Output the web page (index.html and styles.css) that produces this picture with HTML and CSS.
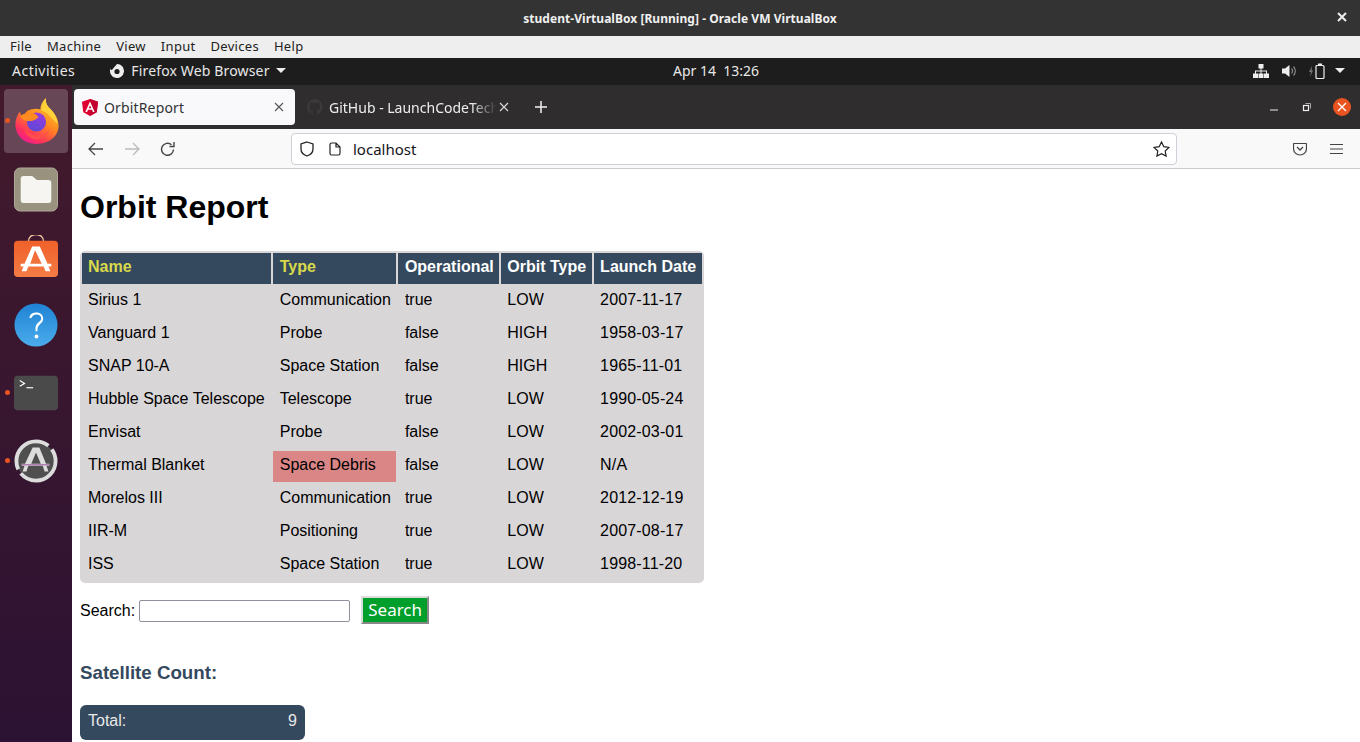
FILE: index.html
```html
<!DOCTYPE html>
<html lang="en">
  <head>
    <meta charset="UTF-8" />
    <title>OrbitReport</title>
    <link rel="stylesheet" href="styles.css">
  </head>
  <body>
    <header class="vm-title">
      <span>student-VirtualBox [Running] - Oracle VM VirtualBox</span>
      <svg class="vm-close" width="10" height="10" viewBox="0 0 10 10"><path d="M1 1l8 8M9 1l-8 8" stroke="#eee" stroke-width="2"/></svg>
    </header>
    <nav class="vm-menu">
      <span>File</span><span>Machine</span><span>View</span><span>Input</span><span>Devices</span><span>Help</span>
    </nav>
    <div class="gnome-bar">
      <span class="activities">Activities</span>
      <div class="app-menu">
        <svg width="16" height="16" viewBox="0 0 16 16"><path d="M8 1a7 7 0 1 1-6.600 4.700C2 7 3 7.600 4.200 7.600 3.800 5.500 5 3.500 7 3 6.500 4.200 7 4.800 8 5a3 3 0 1 1-3 4.200C3.800 8.800 3 8.200 2.500 7.500" fill="#eee"/><circle cx="8" cy="8.500" r="2.600" fill="#1d1d1d"/></svg>
        <span>Firefox Web Browser</span>
        <i class="caret"></i>
      </div>
      <span class="clock">Apr 14&nbsp; 13:26</span>
      <div class="tray">
        <svg width="16" height="14" viewBox="0 0 16 14"><path d="M5.500 0h5v4.500h-2V6.500H14v3h2V14h-5V9.500h2V7.500H8.500v2h2V14h-5V9.500h2v-2H3v2h2V14H0V9.500h2v-3h5.500V4.500h-2z" fill="#eee"/></svg>
        <svg class="tray-speaker" width="16" height="14" viewBox="0 0 16 14"><path d="M0 4.500h3L7.500 1v12L3 9.500H0z" fill="#eee"/><path d="M9.500 4.500a3.500 3.500 0 0 1 0 5M11.500 2.500a6.500 6.500 0 0 1 0 9" fill="none" stroke="#888" stroke-width="1.200"/></svg>
        <svg width="16" height="16" viewBox="0 0 16 16"><path d="M3 3L0 9h2l-1 5 3-6.500H2.500z" fill="#777"/><rect x="7" y="2.500" width="8" height="13" rx="1" fill="none" stroke="#eee" stroke-width="1.200"/><rect x="9" y="0.500" width="4" height="2" fill="#eee"/></svg>
        <i class="caret tray-caret"></i>
      </div>
    </div>

    <div class="desktop">
      <aside class="dock">
        <div class="dock-item active">
          <i class="run-dot"></i>
          <svg width="45" height="46" viewBox="0 0 46 48">
            <defs>
              <linearGradient id="ffBody" x1="0.800" y1="0" x2="0.200" y2="1"><stop offset="0" stop-color="#ffd53a"/><stop offset="0.450" stop-color="#ff8a1f"/><stop offset="0.800" stop-color="#ff2f5e"/><stop offset="1" stop-color="#e8199a"/></linearGradient>
              <linearGradient id="ffGlobe" x1="0.700" y1="0" x2="0.300" y2="1"><stop offset="0" stop-color="#9a3be0"/><stop offset="1" stop-color="#5b49d6"/></linearGradient>
            </defs>
            <path d="M33 0c-1 5 1 8 5 12 5 5 8 11 8 17 0 11-10 19-23 19C10 48 1 39 1 28c0-6 2-11 5-14 0 3 1 5 3 6 1-4 4-7 8-8 4-1 7-1 10 0C27 8 29 3 33 0z" fill="url(#ffBody)"/>
            <path d="M33 0c-1 5 1 8 5 12 4 4 7 10 7 15l-8-8c-2-3-5-5-9-6 0-5 2-10 5-13z" fill="#ffd03a"/>
            <circle cx="23" cy="25" r="10" fill="url(#ffGlobe)"/>
            <path d="M6 19c2 3 4 5 9 5 4 0 7-1 10-4-2-3-5-5-9-4-5 0-8 1-10 3z" fill="#ff8a1f"/>
            <path d="M10 30c3 6 8 9 14 9 5 0 9-2 12-6-3 8-9 11-15 10-6-1-10-6-11-13z" fill="#ff4d4d"/>
          </svg>
        </div>
        <div class="dock-item">
          <svg width="44" height="45" viewBox="0 0 46 46">
            <rect x="0.500" y="0.500" width="45" height="45" rx="6" fill="#99927f" stroke="#b3ad9c"/>
            <path d="M7 12a3 3 0 0 1 3-3h9l5 4h12a3 3 0 0 1 3 3v18a3 3 0 0 1-3 3H10a3 3 0 0 1-3-3z" fill="#f7f5f1"/>
          </svg>
        </div>
        <div class="dock-item">
          <svg width="44" height="44" viewBox="0 0 46 46">
            <defs><linearGradient id="shopBg" x1="0" y1="0" x2="0" y2="1"><stop offset="0" stop-color="#f0602a"/><stop offset="1" stop-color="#f47c45"/></linearGradient></defs>
            <path d="M15 7c0-10 16-10 16 0" fill="none" stroke="#f2c9a0" stroke-width="1.500"/>
            <rect y="6" width="46" height="38" rx="4" fill="url(#shopBg)"/>
            <path d="M19 12h8l8 18h4v3h-3l2 5h-5l-2-5H15l-2 5H8l2-5H7v-3h4zM22 16l-5 14h12z" fill="#fff" fill-rule="evenodd"/>
          </svg>
        </div>
        <div class="dock-item">
          <svg width="44" height="44" viewBox="0 0 46 46">
            <defs><linearGradient id="helpBg" x1="0" y1="0" x2="0" y2="1"><stop offset="0" stop-color="#1f82d4"/><stop offset="1" stop-color="#4bacec"/></linearGradient></defs>
            <circle cx="23" cy="23" r="22.500" fill="url(#helpBg)"/>
            <path d="M16 15.500C17 11 20 10 23.500 10c4 0 7 2.500 7 6.500 0 5-5.500 5.500-6 11v2h-2v-3c0-6 6-6.500 6-10.500 0-2.500-2-4-5-4-2.500 0-4.500 1.500-5.500 4z" fill="#fff"/>
            <circle cx="23.500" cy="35" r="2" fill="#fff"/>
          </svg>
        </div>
        <div class="dock-item">
          <i class="run-dot"></i>
          <svg width="44" height="36" viewBox="0 0 46 36">
            <rect width="46" height="36" rx="4" fill="#4a4a4a"/>
            <path d="M6 5l5 3-5 3" fill="none" stroke="#fff" stroke-width="1.200"/>
            <path d="M13 12.500h7" stroke="#fff" stroke-width="1.200"/>
          </svg>
        </div>
        <div class="dock-item">
          <i class="run-dot"></i>
          <svg width="44" height="46" viewBox="0 0 46 46">
            <circle cx="23" cy="23" r="20" fill="#4f4f4f"/>
            <circle cx="23" cy="23" r="20.500" fill="none" stroke="#ddd" stroke-width="4" stroke-dasharray="50 5 55 5 14 0"/>
            <path d="M19.500 9h7l7 17h3.500v2h-3l2 6h-4l-2-6H15l-2 6H9l2-6H8v-2h3.500zM23 14l-5 12h10z" fill="#ddd" fill-rule="evenodd"/>
            <path d="M8 27h29" stroke="#9a4ea0" stroke-width="1"/>
          </svg>
        </div>
      </aside>

      <div class="browser">
        <div class="tab-bar">
          <div class="tab active-tab">
            <svg width="16" height="17" viewBox="0 0 16 17"><path d="M8 0l8 2.800-1.300 10.500L8 17l-6.700-3.700L0 2.800z" fill="#dd0031"/><path d="M8 0l8 2.800-1.300 10.500L8 17z" fill="#c3002f"/><path d="M8 2.500L3.300 13h1.800l.9-2.300h4l.9 2.300h1.800zM8 6.500l1.400 2.800H6.600z" fill="#fff" fill-rule="evenodd"/></svg>
            <span class="tab-name">OrbitReport</span>
            <svg class="tab-x" width="10" height="10" viewBox="0 0 10 10"><path d="M1 1l8 8M9 1l-8 8" stroke="#555" stroke-width="1.100"/></svg>
          </div>
          <div class="tab other-tab">
            <svg width="16" height="16" viewBox="0 0 16 16"><path d="M8 0a8 8 0 0 0-2.500 15.600c.4.100.5-.2.500-.4v-1.400c-2.200.5-2.700-1-2.700-1-.4-.9-.9-1.200-.9-1.200-.7-.5.100-.5.100-.5.800.1 1.200.8 1.200.8.700 1.200 1.900.9 2.300.7.100-.5.300-.9.500-1.100-1.800-.2-3.600-.9-3.600-4 0-.9.300-1.600.8-2.100-.1-.2-.4-1 .1-2.100 0 0 .7-.2 2.200.8a7.600 7.600 0 0 1 4 0c1.500-1 2.200-.8 2.200-.8.400 1.100.2 1.900.1 2.100.5.600.8 1.300.8 2.100 0 3.100-1.900 3.700-3.700 3.900.3.300.6.800.6 1.500v2.200c0 .2.100.5.600.4A8 8 0 0 0 8 0z" fill="#3a3a3a"/></svg>
            <span class="tab-name fade">GitHub - LaunchCodeTech</span>
            <svg class="tab-x" width="10" height="10" viewBox="0 0 10 10"><path d="M1 1l8 8M9 1l-8 8" stroke="#ddd" stroke-width="1.100"/></svg>
          </div>
          <svg class="new-tab" width="14" height="14" viewBox="0 0 14 14"><path d="M7 1v12M1 7h12" stroke="#f2f2f2" stroke-width="1.500"/></svg>
          <div class="win-controls">
            <svg width="10" height="10" viewBox="0 0 10 10"><path d="M1 8h8" stroke="#eee" stroke-width="1"/></svg>
            <svg width="10" height="10" viewBox="0 0 10 10"><rect x="1.500" y="3.500" width="5" height="5" fill="none" stroke="#eee" stroke-width="1.200"/><path d="M3.500 1.500h5v5" fill="none" stroke="#aaa" stroke-width="1"/></svg>
            <span class="win-close"><svg width="10" height="10" viewBox="0 0 10 10"><path d="M1 1l8 8M9 1l-8 8" stroke="#fff" stroke-width="1.300"/></svg></span>
          </div>
        </div>

        <div class="toolbar">
          <svg class="tool back" width="16" height="14" viewBox="0 0 16 14"><path d="M7 1L1 7l6 6M1 7h14" fill="none" stroke="#444" stroke-width="1.300"/></svg>
          <svg class="tool forward" width="16" height="14" viewBox="0 0 16 14"><path d="M9 1l6 6-6 6M15 7H1" fill="none" stroke="#bbb" stroke-width="1.300"/></svg>
          <svg class="tool reload" width="16" height="16" viewBox="0 0 16 16"><path d="M13.500 8.500a6 6 0 1 1-2-4.700M14 1v4.500H9.500" fill="none" stroke="#444" stroke-width="1.400"/></svg>
          <div class="url-bar">
            <svg width="16" height="16" viewBox="0 0 16 16"><path d="M8 1l6 2v5c0 3.500-3 6-6 7-3-1-6-3.500-6-7V3z" fill="none" stroke="#222" stroke-width="1.300"/></svg>
            <svg class="page-icon" width="12" height="14" viewBox="0 0 12 14"><path d="M1 2.500A1.500 1.500 0 0 1 2.500 1H7l4 4v6.500a1.500 1.500 0 0 1-1.500 1.500h-7A1.500 1.500 0 0 1 1 11.500zM7 1v4h4" fill="none" stroke="#222" stroke-width="1.200"/></svg>
            <span class="url-text">localhost</span>
            <svg class="star" width="17" height="16" viewBox="0 0 17 16"><path d="M8.500 1l2.300 4.700 5.200.7-3.800 3.600.9 5.100-4.600-2.400-4.600 2.400.9-5.100L1 6.400l5.200-.7z" fill="none" stroke="#222" stroke-width="1.200"/></svg>
          </div>
          <svg class="pocket" width="14" height="14" viewBox="0 0 14 14"><path d="M1 1.500h12a.5.500 0 0 1 .5.500v4.500a6.500 6.500 0 0 1-13 0V2a.5.500 0 0 1 .5-.5z" fill="none" stroke="#444" stroke-width="1.200"/><path d="M4 5l3 3 3-3" fill="none" stroke="#444" stroke-width="1.300"/></svg>
          <svg class="burger" width="13" height="12" viewBox="0 0 13 12"><path d="M0 1.500h13M0 6h13M0 10.500h13" stroke="#444" stroke-width="1.200"/></svg>
        </div>

        <main class="page">
          <h1>Orbit Report</h1>
          <table class="sat-table">
            <thead>
              <tr>
                <th class="sortable">Name</th>
                <th class="sortable">Type</th>
                <th>Operational</th>
                <th>Orbit Type</th>
                <th>Launch Date</th>
              </tr>
            </thead>
            <tbody>
              <tr><td>Sirius 1</td><td>Communication</td><td>true</td><td>LOW</td><td>2007-11-17</td></tr>
              <tr><td>Vanguard 1</td><td>Probe</td><td>false</td><td>HIGH</td><td>1958-03-17</td></tr>
              <tr><td>SNAP 10-A</td><td>Space Station</td><td>false</td><td>HIGH</td><td>1965-11-01</td></tr>
              <tr><td>Hubble Space Telescope</td><td>Telescope</td><td>true</td><td>LOW</td><td>1990-05-24</td></tr>
              <tr><td>Envisat</td><td>Probe</td><td>false</td><td>LOW</td><td>2002-03-01</td></tr>
              <tr><td>Thermal Blanket</td><td class="debris">Space Debris</td><td>false</td><td>LOW</td><td>N/A</td></tr>
              <tr><td>Morelos III</td><td>Communication</td><td>true</td><td>LOW</td><td>2012-12-19</td></tr>
              <tr><td>IIR-M</td><td>Positioning</td><td>true</td><td>LOW</td><td>2007-08-17</td></tr>
              <tr><td>ISS</td><td>Space Station</td><td>true</td><td>LOW</td><td>1998-11-20</td></tr>
            </tbody>
          </table>
          <div class="search">
            <label for="q">Search:</label>
            <input id="q" type="text" />
            <button type="button">Search</button>
          </div>
          <h3>Satellite Count:</h3>
          <div class="count-box"><span>Total:</span><span>9</span></div>
        </main>
      </div>
    </div>
  </body>
</html>
```

FILE: styles.css
```css
html,
body {
  margin: 0;
  height: 742px;
  overflow: hidden;
}

body {
  font-family: "Noto Sans", sans-serif;
  display: flex;
  flex-direction: column;
}

.vm-title {
  height: 36px;
  flex: none;
  background: #333333;
  color: #f0f0f0;
  font-size: 12px;
  font-weight: 700;
  letter-spacing: 0.04px;
  display: flex;
  align-items: center;
  justify-content: center;
  position: relative;
}

.vm-close {
  position: absolute;
  right: 13px;
  top: 12px;
}

.vm-menu {
  height: 22px;
  flex: none;
  box-sizing: border-box;
  padding: 0 0 2px 10px;
  background: #eeeeee;
  color: #222;
  font-size: 13px;
  letter-spacing: 0.3px;
  display: flex;
  align-items: center;
  gap: 15px;
}

.gnome-bar {
  height: 27px;
  flex: none;
  box-sizing: border-box;
  padding-bottom: 2px;
  background: #1d1d1d;
  color: #e8e8e8;
  font-size: 14px;
  display: flex;
  align-items: center;
  position: relative;
}

.activities {
  margin-left: 12px;
  letter-spacing: 0.5px;
}

.app-menu {
  display: flex;
  align-items: center;
  gap: 6px;
  margin-left: 34px;
  letter-spacing: 0.15px;
}

.caret {
  width: 0;
  height: 0;
  border-left: 5px solid transparent;
  border-right: 5px solid transparent;
  border-top: 5px solid #eee;
}

.clock {
  position: absolute;
  left: 673px;
}

.tray {
  margin-left: auto;
  margin-right: 15px;
  display: flex;
  align-items: center;
  gap: 13px;
}

.tray-speaker {
  margin-right: -2px;
}

.tray-caret {
  margin-left: -3px;
}

.desktop {
  flex: 1;
  display: flex;
  min-height: 0;
}

.dock {
  width: 72px;
  flex: none;
  background: linear-gradient(#431a2c, #2c1233);
  padding: 4px;
  box-sizing: border-box;
  display: flex;
  flex-direction: column;
  gap: 4px;
}

.dock-item {
  height: 64px;
  flex: none;
  display: flex;
  align-items: center;
  justify-content: center;
  position: relative;
  border-radius: 4px;
}

.dock-item.active {
  background: rgba(255, 255, 255, 0.2);
}

.run-dot {
  position: absolute;
  left: 1px;
  top: 29px;
  width: 5px;
  height: 5px;
  border-radius: 50%;
  background: #e95420;
}

.browser {
  flex: 1;
  min-width: 0;
  display: flex;
  flex-direction: column;
}

.tab-bar {
  height: 44px;
  flex: none;
  background: #2f2d2d;
  padding-left: 2px;
  box-sizing: border-box;
  display: flex;
  align-items: center;
}

.tab {
  width: 221px;
  height: 36px;
  box-sizing: border-box;
  padding: 0 11px;
  border-radius: 4px;
  color: #eee;
  font-size: 14px;
  letter-spacing: 0.15px;
  display: flex;
  align-items: center;
  gap: 6px;
}

.active-tab {
  background: #f9f9fb;
  color: #333;
  padding: 0 11px 0 8px;
  margin-right: 1px;
}

.other-tab {
  padding-right: 8px;
  letter-spacing: 0;
}

.tab-name {
  flex: 1;
  white-space: nowrap;
  overflow: hidden;
}

.fade {
  margin-right: -4px;
  -webkit-mask-image: linear-gradient(to right, #000 85%, transparent);
  mask-image: linear-gradient(to right, #000 85%, transparent);
}

.tab-x {
  flex: none;
}

.new-tab {
  margin-left: 17px;
}

.win-controls {
  margin-left: auto;
  margin-right: 9px;
  display: flex;
  align-items: center;
  gap: 23px;
}

.win-close {
  width: 18px;
  height: 18px;
  margin-left: -2px;
  border-radius: 50%;
  background: #e95420;
  display: flex;
  align-items: center;
  justify-content: center;
}

.toolbar {
  height: 40px;
  flex: none;
  box-sizing: border-box;
  background: #f9f9fa;
  border-bottom: 1px solid #cccccc;
  display: flex;
  align-items: center;
}

.back {
  margin-left: 16px;
}

.forward {
  margin-left: 20px;
}

.reload {
  margin-left: 20px;
}

.url-bar {
  width: 886px;
  height: 32px;
  box-sizing: border-box;
  margin-left: 115px;
  background: #fff;
  border: 1px solid #cfcfd8;
  border-radius: 4px;
  display: flex;
  align-items: center;
  padding: 0 6px 0 7px;
}

.page-icon {
  margin-left: 14px;
}

.url-text {
  margin-left: 12px;
  font-size: 15px;
  color: #15141a;
}

.star {
  margin-left: auto;
}

.pocket {
  margin-left: 116px;
}

.burger {
  margin-left: 23px;
}

.page {
  flex: 1;
  min-height: 0;
  background: #fff;
  padding: 0 8px;
  font-family: "Liberation Sans", Arial, sans-serif;
  font-size: 16px;
  color: #000;
}

h1 {
  font-size: 32px;
  margin: 20px 0 25px;
}

.sat-table {
  background: #d9d6d8;
  border-radius: 5px;
  border-spacing: 2px;
}

.sat-table th,
.sat-table td {
  height: 27px;
  padding: 0 6px 4px;
  text-align: left;
  white-space: nowrap;
}

.sat-table th:nth-child(2),
.sat-table td:nth-child(2),
.sat-table th:nth-child(3),
.sat-table td:nth-child(3) {
  padding-left: 7px;
  padding-right: 5px;
}

.sat-table th:nth-child(4),
.sat-table td:nth-child(4),
.sat-table th:nth-child(5),
.sat-table td:nth-child(5) {
  padding-left: 6.5px;
  padding-right: 5.5px;
}

.sat-table td:last-child {
  letter-spacing: 0.15px;
}

.sat-table th {
  background: #34495e;
  color: #fff;
}

.sat-table th.sortable {
  color: #d9d94a;
}

.sat-table td.debris {
  background: #db8686;
}

.search {
  display: flex;
  align-items: center;
  margin-top: 13px;
}

.search input {
  width: 211px;
  height: 22px;
  box-sizing: border-box;
  margin-left: 4px;
  border: 1px solid #8f8f9d;
  border-radius: 2px;
  padding: 0 4px;
}

.search button {
  width: 68px;
  height: 28px;
  margin: 0 0 2px 11px;
  padding: 0 0 5px;
  box-sizing: border-box;
  background: #009e2a;
  color: #fff;
  border: 2px solid #dcdcdc;
  border-right-color: #888;
  border-bottom-color: #888;
  font-family: "Noto Sans", sans-serif;
  font-size: 17px;
}

h3 {
  font-size: 18.72px;
  color: #34495e;
  margin: 36px 0 21px;
}

.count-box {
  width: 225px;
  height: 35px;
  box-sizing: border-box;
  padding: 0 8px 4px;
  background: #34495e;
  color: #e8e8e8;
  border-radius: 6px;
  display: flex;
  align-items: center;
  justify-content: space-between;
}
```
